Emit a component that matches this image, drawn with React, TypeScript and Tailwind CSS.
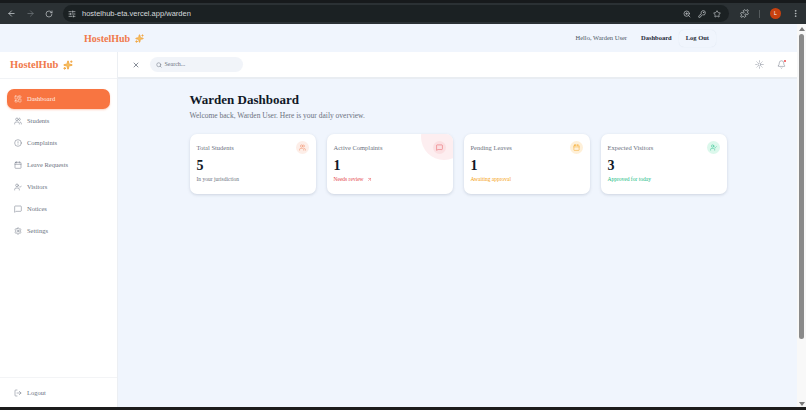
import React from "react";
import { ArrowLeft, ArrowRight, RotateCw, SlidersHorizontal, ZoomIn, KeyRound, Star, Puzzle, EllipsisVertical, X, Search, Sun, Bell, LayoutDashboard, Users, CircleAlert, Calendar, UserCheck, MessageSquare, Settings, LogOut, ArrowUpRight, Sparkles } from "lucide-react";

const nav = [
  { label: "Students", Icon: Users },
  { label: "Complaints", Icon: CircleAlert },
  { label: "Leave Requests", Icon: Calendar },
  { label: "Visitors", Icon: UserCheck },
  { label: "Notices", Icon: MessageSquare },
  { label: "Settings", Icon: Settings },
];

function Card({ title, value, note, noteClass, iconBg, iconColor, Icon, corner, arrow }: any) {
  return (
    <div className="relative h-[60px] w-[126px] overflow-hidden rounded-[7px] bg-white px-[7px] pt-[7px] shadow-[0_1px_3px_rgba(100,116,139,0.25)]">
      {corner && <div className="absolute -right-[14px] -top-[20px] h-[46px] w-[46px] rounded-full bg-[#fdeef0]" />}
      <div className="relative flex items-center justify-between">
        <span className="text-[6.5px] text-[#6b7280]">{title}</span>
        <span className={`flex h-[13px] w-[13px] items-center justify-center rounded-full ${iconBg}`}>
          <Icon size={7} strokeWidth={1.5} className={iconColor} />
        </span>
      </div>
      <div className="relative mt-[4px] text-[14px] font-bold leading-[16px] text-[#111827]">{value}</div>
      <div className={`relative mt-[1px] flex items-center gap-[3px] text-[5.5px] leading-[8px] ${noteClass}`}>
        {note}
        {arrow && <ArrowUpRight size={5} strokeWidth={2} />}
      </div>
    </div>
  );
}

export default function App() {
  return (
    <div className="relative flex h-[410px] w-[806px] flex-col overflow-hidden bg-[#f0f5fd] font-['Liberation_Serif',serif]">
      {/* browser toolbar */}
      <div className="flex h-[24px] shrink-0 items-center gap-[10px] border-t-[3px] border-[#171a1c] bg-[#2b3134] pl-[7px] pr-[6px] font-['Liberation_Sans',sans-serif]">
        <ArrowLeft size={9} className="text-[#c8cdd0]" />
        <ArrowRight size={9} className="text-[#6f7679]" />
        <RotateCw size={8} className="text-[#c8cdd0]" />
        <div className="flex h-[17px] flex-1 items-center rounded-full bg-[#1b2123] pl-[5px] pr-[8px]">
          <SlidersHorizontal size={8} className="text-[#c8cdd0]" />
          <span className="ml-[6px] flex-1 text-[7.5px] text-[#d5d9db]">hostelhub-eta.vercel.app/warden</span>
          <div className="flex items-center gap-[7px] text-[#c8cdd0]">
            <ZoomIn size={8} />
            <KeyRound size={8} />
            <Star size={8} />
          </div>
        </div>
        <Puzzle size={9} className="ml-[1px] text-[#c8cdd0]" />
        <div className="h-[8px] w-px bg-[#555b5e]" />
        <div className="flex h-[11px] w-[11px] items-center justify-center rounded-full bg-[#c8410f] text-[5px] text-white">L</div>
        <EllipsisVertical size={9} className="text-[#c8cdd0]" />
      </div>

      <div className="flex min-h-0 flex-1">
        <div className="flex min-w-0 flex-1 flex-col">
          {/* site nav */}
          <div className="flex h-[28px] shrink-0 items-center pl-[84px]">
            <span className="text-[10px] font-bold text-[#f0794b]">HostelHub</span>
            <Sparkles size={9} className="ml-[5px] fill-[#f6c05c] text-[#f0a23c]" />
            <div className="ml-auto flex items-center pr-[81px]">
              <span className="text-[6.5px] text-[#4b5563]">Hello, Warden User</span>
              <span className="ml-[14px] text-[6.5px] font-bold text-[#1f2937]">Dashboard</span>
              <span className="ml-[7px] flex h-[17px] items-center rounded-[5px] px-[7px] text-[6.5px] font-bold text-[#1f2937] shadow-[0_0_1px_rgba(148,163,184,0.25)]">Log Out</span>
            </div>
          </div>

          <div className="flex min-h-0 flex-1">
            {/* sidebar */}
            <aside className="flex w-[117.5px] shrink-0 flex-col border-r border-[#eceff3] bg-white">
              <div className="flex h-[27px] shrink-0 items-center border-b border-[#f1f3f6] pl-[10px]">
                <span className="text-[10.5px] font-bold text-[#f0794b]">HostelHub</span>
                <Sparkles size={10} className="ml-[5px] fill-[#f6c05c] text-[#f0a23c]" />
              </div>
              <nav className="flex flex-col gap-[2px] px-[7px] pt-[10px]">
                <div className="flex h-[20px] items-center gap-[5px] rounded-[7px] bg-[#f87541] pl-[7px] text-[6.5px] text-[#fff1e8] shadow-[0_1px_2px_rgba(248,117,65,0.35)]">
                  <LayoutDashboard size={8} strokeWidth={1.5} />
                  Dashboard
                </div>
                {nav.map(({ label, Icon }) => (
                  <div key={label} className="flex h-[20px] items-center gap-[5px] pl-[7px] text-[6.5px] text-[#6b7280]">
                    <Icon size={8} strokeWidth={1.5} />
                    {label}
                  </div>
                ))}
              </nav>
              <div className="mt-auto flex h-[30px] items-center gap-[5px] border-t border-[#f3f4f6] pl-[14px] text-[6.5px] text-[#6b7280]">
                <LogOut size={8} strokeWidth={1.5} className="rotate-0" />
                Logout
              </div>
            </aside>

            <div className="flex min-w-0 flex-1 flex-col">
              {/* header */}
              <div className="flex h-[27px] shrink-0 items-center border-b-2 border-[#e9edf2] bg-white pl-[14px] pr-[11px]">
                <X size={8} className="text-[#4b5563]" />
                <div className="ml-[10px] flex h-[15px] w-[93px] items-center gap-[3px] rounded-full bg-[#f1f4f9] pl-[6px] text-[6px] text-[#6b7280]">
                  <Search size={6} />
                  Search...
                </div>
                <Sun size={9} strokeWidth={1.25} className="ml-auto text-[#6b7280]" />
                <div className="relative ml-[13px]">
                  <Bell size={9} strokeWidth={1.25} className="text-[#6b7280]" />
                  <div className="absolute right-0 top-0 h-[2px] w-[2px] rounded-full bg-[#ef4444]" />
                </div>
              </div>
              {/* main */}
              <main className="min-h-0 flex-1 pl-[72px] pt-[13px]">
                <h1 className="text-[13px] font-bold leading-[16px] text-[#111827]">Warden Dashboard</h1>
                <p className="mt-[3px] text-[7.5px] leading-[10px] text-[#6b7280]">Welcome back, Warden User. Here is your daily overview.</p>
                <div className="mt-[13px] flex gap-[11px]">
                  <Card title="Total Students" value="5" note="In your jurisdiction" noteClass="text-[#6b7280]" iconBg="bg-[#fdeee8]" iconColor="text-[#f0794b]" Icon={Users} />
                  <Card title="Active Complaints" value="1" note="Needs review" noteClass="text-[#e5484d]" iconBg="bg-[#fbdfe2]" iconColor="text-[#e5484d]" Icon={MessageSquare} corner arrow />
                  <Card title="Pending Leaves" value="1" note="Awaiting approval" noteClass="text-[#f59e0b]" iconBg="bg-[#fef0d9]" iconColor="text-[#f59e0b]" Icon={Calendar} />
                  <Card title="Expected Visitors" value="3" note="Approved for today" noteClass="text-[#10b981]" iconBg="bg-[#dcf8ec]" iconColor="text-[#10b981]" Icon={UserCheck} />
                </div>
              </main>
            </div>
          </div>
        </div>
        {/* browser scrollbar */}
        <div className="flex w-[9px] shrink-0 flex-col items-center bg-[#f8f8f8] pt-[3px]">
          <div className="h-0 w-0 border-x-[3px] border-b-[4px] border-x-transparent border-b-[#7a7a7a]" />
          <div className="mt-[3px] h-[305px] w-[5px] rounded-full bg-[#8a8a8a]" />
          <div className="mt-auto mb-[1px] h-0 w-0 border-x-[3px] border-t-[4px] border-x-transparent border-t-[#7a7a7a]" />
        </div>
      </div>
      <div className="h-[3px] shrink-0 bg-[#1c1c1c]" />
    </div>
  );
}
